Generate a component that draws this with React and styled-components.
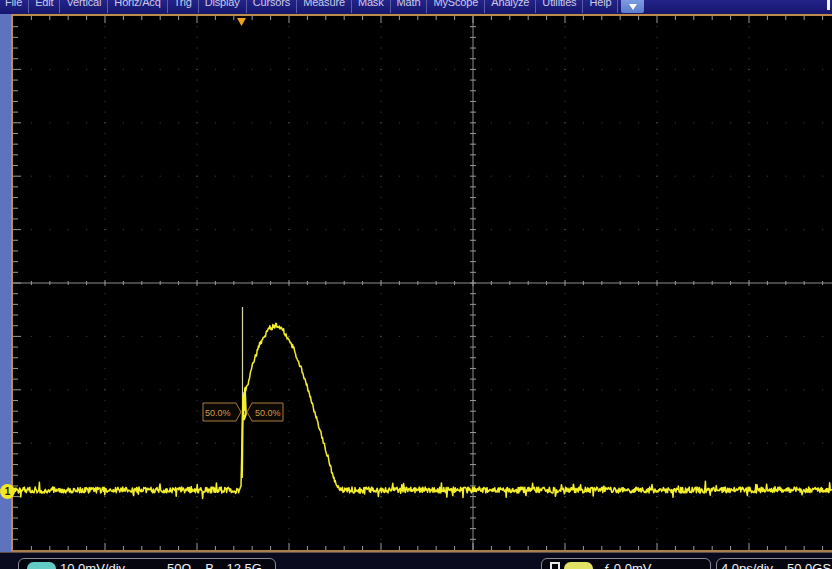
import React from "react";
import styled, { createGlobalStyle } from "styled-components";

const GlobalStyle = createGlobalStyle`
  * { box-sizing: border-box; margin: 0; padding: 0; }
  body {
    background: #000;
    overflow: hidden;
    font-family: "Liberation Sans", Arial, sans-serif;
  }
`;

// screen inner size (px) and graticule divisions
const W = 819;
const H = 534;
const DX = 92;
const DY = 53.4;

const MENU = [
  "File", "Edit", "Vertical", "Horiz/Acq", "Trig", "Display", "Cursors",
  "Measure", "Mask", "Math", "MyScope", "Analyze", "Utilities", "Help",
];

function rng(seed) {
  let a = seed;
  return () => {
    a |= 0;
    a = (a + 0x6d2b79f5) | 0;
    let t = Math.imul(a ^ (a >>> 15), 1 | a);
    t = (t + Math.imul(t ^ (t >>> 7), 61 | t)) ^ t;
    return ((t ^ (t >>> 14)) >>> 0) / 4294967296;
  };
}

// pulse shape in screen coords (absolute - 13, -16)
const PULSE = [
  [240, 490], [241, 488], [242, 440], [243, 398], [245, 390], [248, 384],
  [252, 367], [260, 343], [270, 328], [277, 325], [282, 328], [293, 347],
  [303, 373], [313, 407], [320, 430], [328, 457], [333, 477], [338, 487],
  [342, 490],
].map(([x, y]) => [x - 13, y - 16]);

const BASE = 474;

function pulseY(x) {
  if (x < PULSE[0][0] || x > PULSE[PULSE.length - 1][0]) return null;
  for (let i = 0; i < PULSE.length - 1; i++) {
    const [x0, y0] = PULSE[i];
    const [x1, y1] = PULSE[i + 1];
    if (x >= x0 && x <= x1) return y0 + ((y1 - y0) * (x - x0)) / (x1 - x0);
  }
  return null;
}

function tracePoints() {
  const r = rng(7);
  const pts = [];
  for (let x = 0; x <= W; x += 0.6) {
    const p = pulseY(x);
    let y;
    if (p === null) {
      y = BASE + (r() - 0.5) * 6;
      if (r() < 0.08) y += (r() - 0.5) * 13;
    } else {
      y = p + (r() - 0.5) * 5;
    }
    pts.push(`${x.toFixed(1)},${y.toFixed(1)}`);
  }
  return pts.join(" ");
}

function Graticule() {
  const dots = [];
  const cx = DX * 5;
  const cy = DY * 5;
  for (let i = 1; i < 10; i++) {
    const gx = i * DX;
    for (let k = 1; k < 50; k++) {
      const y = (k * DY) / 5;
      if (i !== 5) dots.push(<rect key={`v${i}-${k}`} x={gx - 0.6} y={y - 0.6} width={1.2} height={1.2} fill={k % 5 === 0 ? "#6a6a6a" : "#333"} />);
    }
  }
  for (let j = 1; j < 10; j++) {
    const gy = j * DY;
    for (let k = 1; k < 50; k++) {
      const x = (k * DX) / 5;
      if (j !== 5 && k % 5 !== 0) dots.push(<rect key={`h${j}-${k}`} x={x - 0.6} y={gy - 0.6} width={1.2} height={1.2} fill="#333" />);
    }
  }

  const ticks = [];
  for (let k = 1; k < 50; k++) {
    const x = (k * DX) / 5;
    const major = k % 5 === 0;
    ticks.push(<line key={`t${k}`} x1={x} y1={0} x2={x} y2={major ? 7 : 4} />);
    ticks.push(<line key={`b${k}`} x1={x} y1={H} x2={x} y2={H - (major ? 7 : 4)} />);
    ticks.push(<line key={`c${k}`} x1={x} y1={cy - (major ? 3 : 2)} x2={x} y2={cy + (major ? 3 : 2)} />);
    const y = (k * DY) / 5;
    ticks.push(<line key={`l${k}`} x1={0} y1={y} x2={k % 5 === 0 ? 8 : 5} y2={y} />);
    ticks.push(<line key={`m${k}`} x1={cx - 3} y1={y} x2={cx + 3} y2={y} />);
  }

  return (
    <Svg width={W} height={H} viewBox={`0 0 ${W} ${H}`}>
      {dots}
      <g stroke="#8c8c8c" strokeWidth="1">
        <line x1={0} y1={cy} x2={W} y2={cy} />
        <line x1={cx} y1={0} x2={cx} y2={H} />
      </g>
      <g stroke="#9a9a9a" strokeWidth="1">{ticks}</g>

      <polygon points="224,2 233,2 228.5,10" fill="#eea21c" />

      <line x1={229.5} y1={291} x2={229.5} y2={455} stroke="#d8d6a8" strokeWidth="1.2" />
      <polyline points={tracePoints()} fill="none" stroke="#f4ef2c" strokeWidth="1.5" strokeLinejoin="round" />
      <polyline points="229,462 230,380 231,395 232,372 233,398 231,404 230,388" fill="none" stroke="#f4ef2c" strokeWidth="1.8" />

      <g fill="#0c0804" stroke="#a97a3c" strokeWidth="1">
        <polygon points="190,387 223,387 228,396 223,405 190,405" />
        <polygon points="239,387 270,387 270,405 239,405 234,396" />
      </g>
      <g fill="#d79a4c" fontSize="9" fontFamily="Liberation Sans, Arial, sans-serif">
        <text x={192} y={399.5}>50.0%</text>
        <text x={242} y={399.5}>50.0%</text>
      </g>
    </Svg>
  );
}

function App() {
  return (
    <>
      <GlobalStyle />
      <Page>
        <MenuBar>
          {MENU.map((m, i) => (
            <MenuItem key={m} $first={i === 0}>{m}</MenuItem>
          ))}
          <MenuDrop>
            <svg width="10" height="8" viewBox="0 0 10 8">
              <polygon points="1,1 9,1 5,7" fill="#fff" />
            </svg>
          </MenuDrop>
          <CornerMark />
        </MenuBar>
        <Workspace>
          <SideStrip />
          <Screen>
            <Graticule />
            <ChannelMarker>1</ChannelMarker>
          </Screen>
        </Workspace>
        <StatusBar>
          <StatusBox $width={258} $gap={0}>
            <Pill $color="#62cbc4" />
            <StatusText $ml={4}>10.0mV/div</StatusText>
            <StatusText $ml={42}>50Ω</StatusText>
            <StatusText $ml={14}>B<sub>W</sub></StatusText>
            <StatusText $ml={5}>12.5G</StatusText>
          </StatusBox>
          <StatusBox $width={170} $gap={265}>
            <RefIcon />
            <Pill $color="#e2e264" />
            <StatusText $ml={10}>ƒ 0.0mV</StatusText>
          </StatusBox>
          <StatusBox $width={140} $gap={5} $pad={4}>
            <StatusText $ml={0}>4.0ps/div</StatusText>
            <StatusText $ml={14}>50.0GS/s</StatusText>
          </StatusBox>
        </StatusBar>
      </Page>
    </>
  );
}

const Page = styled.div`
  width: 832px;
  height: 569px;
  display: flex;
  flex-direction: column;
  overflow: hidden;
  background: #000;
`;

const MenuBar = styled.div`
  height: 14px;
  flex-shrink: 0;
  display: flex;
  align-items: flex-start;
  background: linear-gradient(#23238a, #16166c);
  position: relative;
  overflow: hidden;
`;

const MenuItem = styled.div`
  font-size: 11px;
  line-height: 11px;
  margin-top: -3px;
  height: 16px;
  padding: 0 6px 0 ${(p) => (p.$first ? "5px" : "6px")};
  color: #c9cbe6;
  letter-spacing: -0.15px;
  border-right: 1px solid #5a5ca8;
  white-space: nowrap;
`;

const MenuDrop = styled.div`
  width: 23px;
  height: 13px;
  margin-left: 3px;
  background: linear-gradient(#7d9be0, #5c7ccb);
  border-radius: 0 0 2px 2px;
  display: flex;
  align-items: center;
  justify-content: center;
`;

const CornerMark = styled.div`
  position: absolute;
  right: 2px;
  top: 0;
  width: 3px;
  height: 10px;
  background: #f4f4f4;
`;

const Workspace = styled.div`
  flex: 1;
  display: flex;
  min-height: 0;
`;

const SideStrip = styled.div`
  width: 11px;
  flex-shrink: 0;
  background: #5d73bd;
`;

const Screen = styled.div`
  flex: 1;
  position: relative;
  background: #000;
  border-top: 2px solid #c08c4c;
  border-left: 2px solid #c08c4c;
  border-bottom: 2px solid #a8804e;
`;

const Svg = styled.svg`
  display: block;
`;

const ChannelMarker = styled.div`
  position: absolute;
  left: -13px;
  top: 468px;
  width: 15px;
  height: 15px;
  border-radius: 50%;
  background: #f2e826;
  color: #2a2400;
  font-size: 10px;
  font-weight: bold;
  line-height: 15px;
  text-align: center;
`;

const StatusBar = styled.div`
  height: 17px;
  flex-shrink: 0;
  display: flex;
  align-items: flex-start;
  padding: 5px 0 0 18px;
  background: #0a0a1e;
  border-top: 1px solid #5e5048;
  overflow: hidden;
`;

const StatusBox = styled.div`
  flex-shrink: 0;
  width: ${(p) => p.$width}px;
  margin-left: ${(p) => p.$gap}px;
  height: 24px;
  border: 1px solid #8a8a92;
  border-radius: 6px;
  background: #050510;
  display: flex;
  align-items: flex-start;
  padding: 3px 0 0 ${(p) => (p.$pad !== undefined ? p.$pad : 8)}px;
`;

const Pill = styled.div`
  width: 29px;
  height: 13px;
  border-radius: 7px;
  background: ${(p) => p.$color};
  flex-shrink: 0;
`;

const RefIcon = styled.div`
  width: 10px;
  height: 12px;
  margin-right: 4px;
  border: 2px solid #e8e8e8;
  border-bottom: none;
  flex-shrink: 0;
`;

const StatusText = styled.span`
  color: #f0f0f0;
  font-size: 13px;
  line-height: 14px;
  margin-left: ${(p) => (p.$ml !== undefined ? p.$ml : 5)}px;
  white-space: nowrap;
  sub {
    font-size: 8px;
  }
`;

export default App;
